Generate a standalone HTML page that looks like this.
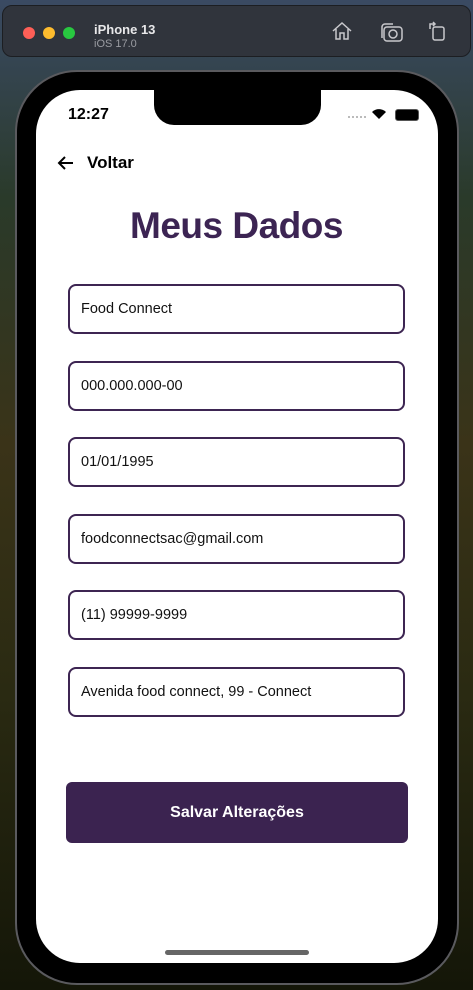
<!DOCTYPE html>
<html><head><meta charset="utf-8"><style>
*{margin:0;padding:0;box-sizing:border-box}
body{width:473px;height:990px;overflow:hidden;position:relative;font-family:"Liberation Sans",sans-serif;
background:linear-gradient(180deg,#3a4a63 0%,#2a3a2a 20%,#3a3318 45%,#2a2a12 70%,#141608 100%);}
.bar{position:absolute;left:2px;top:5px;width:469px;height:52px;background:#30343c;border-radius:10px;border:1px solid #1c1e22}
.dot{position:absolute;top:21px;width:12px;height:12px;border-radius:50%}
.t1{position:absolute;left:91px;top:16px;color:#e8e8ea;font-weight:bold;font-size:13px}
.t2{position:absolute;left:91px;top:32px;color:#9a9ca2;font-size:11px}
.phone{position:absolute;left:15px;top:70px;width:444px;height:915px;border-radius:62px;background:#000;border:2px solid #5a5a5e}
.screen{position:absolute;left:36px;top:90px;width:402px;height:873px;border-radius:44px;background:#fff;overflow:hidden}
.notch{position:absolute;left:154px;top:90px;width:167px;height:35px;background:#000;border-radius:0 0 20px 20px}
.in{position:absolute;left:68px;width:337px;height:50px;border:2px solid #3d2552;border-radius:8px;font-size:14.5px;color:#111;padding-left:11px;line-height:47px}
</style></head><body>
<div class="bar">
<div class="dot" style="left:20px;background:#fe5f57"></div>
<div class="dot" style="left:40px;background:#febc2e"></div>
<div class="dot" style="left:60px;background:#28c840"></div>
<div class="t1">iPhone 13</div><div class="t2">iOS 17.0</div>
<svg style="position:absolute;left:328px;top:14px" width="22" height="22" viewBox="0 0 22 22" fill="none" stroke="#c8c8cc" stroke-width="1.5"><path d="M2 11L11 3l9 8M5 9v10h4v-6h4v6h4V9"/></svg>
<svg style="position:absolute;left:377px;top:15px" width="24" height="22" viewBox="0 0 24 22" fill="none" stroke="#c8c8cc" stroke-width="1.5"><rect x="4" y="6" width="18" height="14" rx="3"/><path d="M2 17V6a3 3 0 0 1 3-3h8"/><circle cx="13" cy="13" r="4"/></svg>
<svg style="position:absolute;left:424px;top:13px" width="20" height="24" viewBox="0 0 20 24" fill="none" stroke="#c8c8cc" stroke-width="1.5"><rect x="6" y="8" width="11" height="13" rx="2"/><path d="M3 10V5h5M6 3l2 2-2 2"/></svg>
</div>
<div class="phone"></div>
<div class="screen"></div>
<div class="notch"></div>
<div style="position:absolute;left:68px;top:106px;font-weight:bold;font-size:16px;color:#000">12:27</div>
<div style="position:absolute;left:348px;top:116px;width:18px;height:2px;border-top:2px dotted #bbb"></div>
<svg style="position:absolute;left:371px;top:108px" width="16" height="12" viewBox="0 0 16 12"><path d="M8 11L1 4a10 10 0 0 1 14 0z" fill="#000"/></svg>
<div style="position:absolute;left:395px;top:109px;width:24px;height:12px;border-radius:3px;background:#000;border:1px solid #555"></div>
<svg style="position:absolute;left:57px;top:155px" width="18" height="16" viewBox="0 0 18 16" fill="none" stroke="#000" stroke-width="2"><path d="M16 8H3M8 2L2 8l6 6"/></svg>
<div style="position:absolute;left:87px;top:153px;font-weight:bold;font-size:17px;color:#000">Voltar</div>
<div style="position:absolute;left:0;width:473px;top:205px;text-align:center;font-weight:bold;font-size:37px;color:#3c2453;letter-spacing:-0.5px">Meus Dados</div>
<div class="in" style="top:284px">Food Connect</div>
<div class="in" style="top:361px">000.000.000-00</div>
<div class="in" style="top:437px">01/01/1995</div>
<div class="in" style="top:514px">foodconnectsac@gmail.com</div>
<div class="in" style="top:590px">(11) 99999-9999</div>
<div class="in" style="top:667px">Avenida food connect, 99 - Connect</div>
<div style="position:absolute;left:66px;top:782px;width:342px;height:61px;background:#3b2350;border-radius:6px;color:#fff;font-weight:bold;font-size:16px;text-align:center;line-height:61px">Salvar Alterações</div>
<div style="position:absolute;left:165px;top:950px;width:144px;height:5px;border-radius:3px;background:#666"></div>
</body></html>
